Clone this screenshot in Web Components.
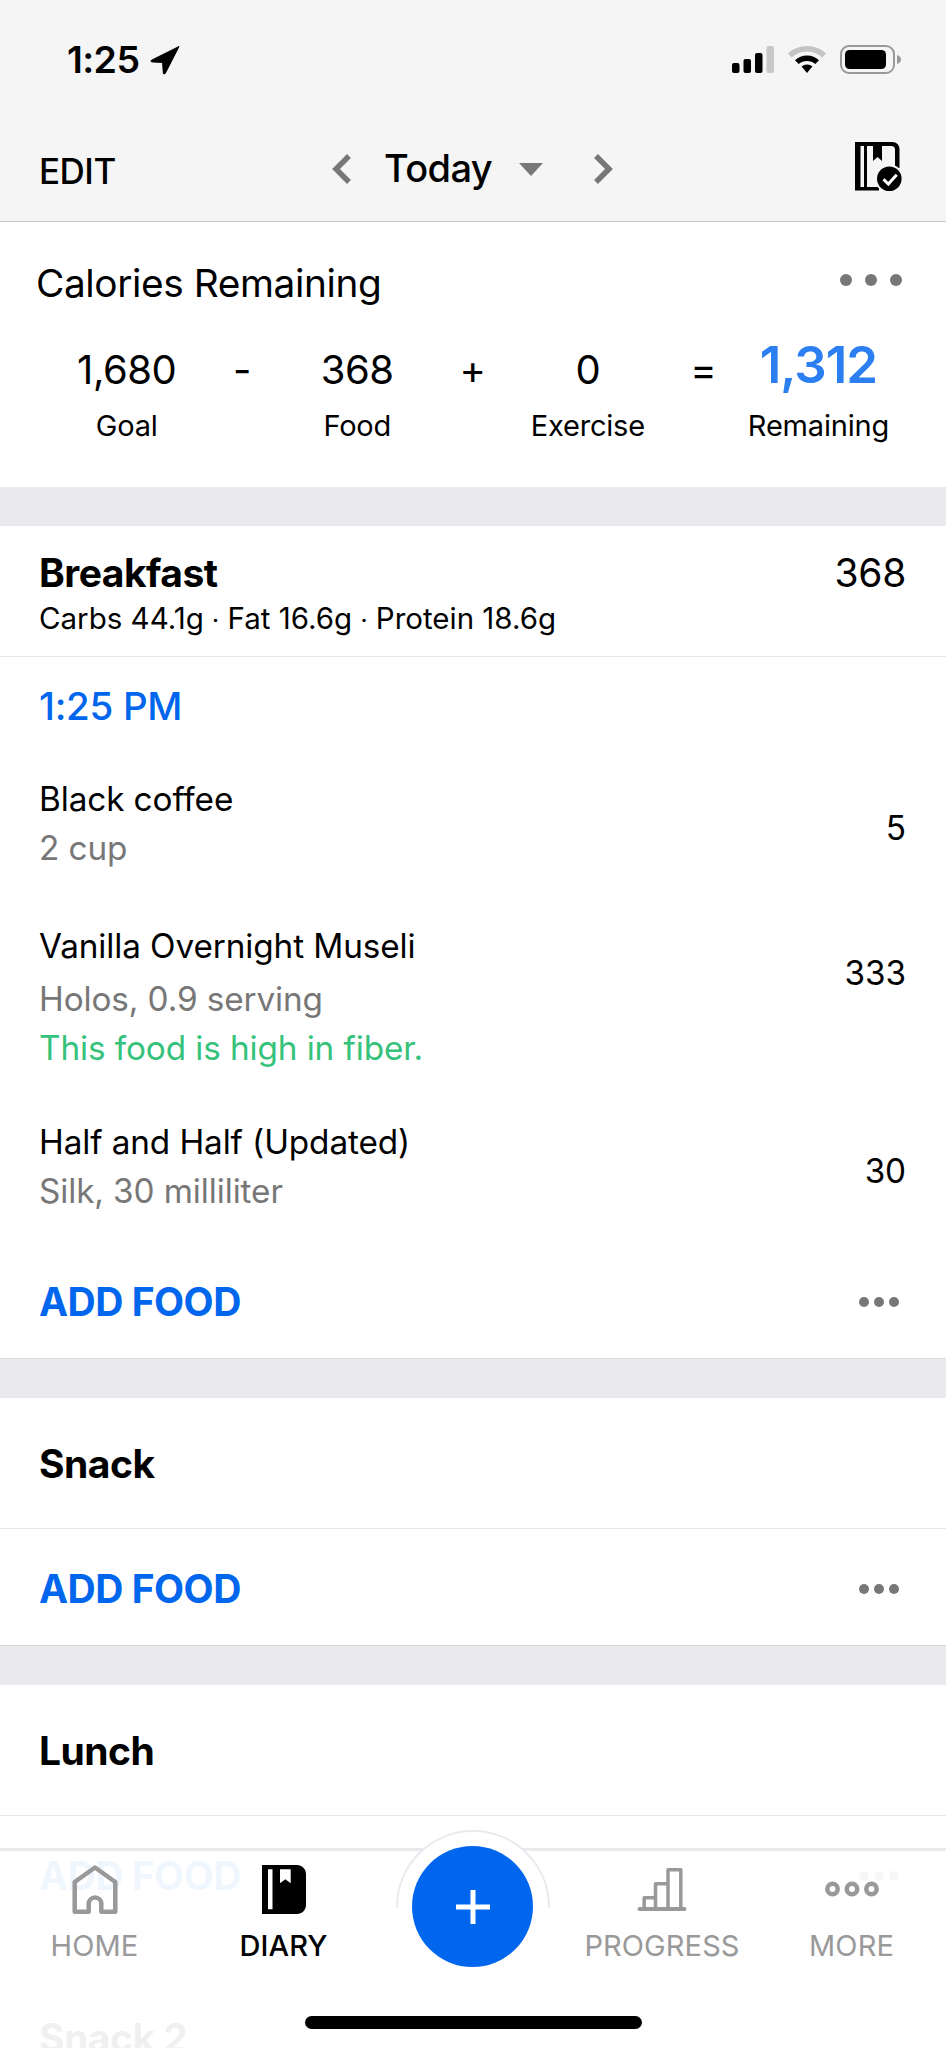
<!DOCTYPE html>
<html>
<head>
<meta charset="utf-8">
<style>
    html, body { margin: 0; padding: 0; background: #e9e9ee; }
    body { width: 946px; height: 2048px; overflow: hidden; position: relative; font-family: Inter, "Noto Sans", sans-serif; color: #000; }
</style>
</head>
<body>
<diary-screen>
    <status-bar></status-bar>
    <diary-header></diary-header>
    <calories-card></calories-card>
    <meal-section>
        <span slot="title">Breakfast</span>
        <span slot="total">368</span>
        <span slot="macros">Carbs 44.1g <small>·</small> Fat 16.6g <small>·</small> Protein 18.6g</span>
        <time-label>1:25 PM</time-label>
        <food-row name="Black coffee" detail="2 cup" kcal="5"></food-row>
        <food-row name="Vanilla Overnight Museli" detail="Holos, 0.9 serving" note="This food is high in fiber." kcal="333"></food-row>
        <food-row name="Half and Half (Updated)" detail="Silk, 30 milliliter" kcal="30"></food-row>
    </meal-section>
    <meal-section><span slot="title">Snack</span></meal-section>
    <meal-section><span slot="title">Lunch</span></meal-section>
    <meal-section hide-add><span slot="title">Snack 2</span></meal-section>
</diary-screen>
<tab-bar></tab-bar>

<script>
class DiaryScreen extends HTMLElement {
    constructor() {
        super();
        this.attachShadow({ mode: 'open' }).innerHTML = `
            <style>
                :host { display: flex; flex-direction: column; height: 2048px; overflow: hidden; }
            </style>
            <slot></slot>
        `;
    }
}
customElements.define('diary-screen', DiaryScreen);

class StatusBar extends HTMLElement {
    constructor() {
        super();
        this.attachShadow({ mode: 'open' }).innerHTML = `
            <style>
                :host { display: flex; align-items: center; flex: none; height: 121px; padding: 0 44px 2px 67px; box-sizing: border-box; background: #f5f5f5; }
                .time { font-size: 37.5px; font-weight: 600; letter-spacing: -0.6px; }
                .arrow { margin-left: 11px; }
                .right { margin-left: auto; display: flex; align-items: center; gap: 13px; }
            </style>
            <span class="time">1:25</span>
            <svg class="arrow" width="30" height="30" viewBox="0 0 30 30"><path d="M29 1.500 1.500 15.200c-.9.6-.6 1.600.5 1.700l10.600.5.7 10.600c.1 1.200 1.400 1.400 2 .3z" fill="#000" stroke="#000" stroke-width="1" stroke-linejoin="round"/></svg>
            <div class="right">
                <svg width="42" height="28" viewBox="0 0 42 28">
                    <rect x="0" y="17" width="7.500" height="10" rx="2"/>
                    <rect x="11.500" y="13" width="7.500" height="14" rx="2"/>
                    <rect x="23" y="7" width="7.500" height="20" rx="2"/>
                    <rect x="34.500" y="0" width="7.500" height="27" rx="2" fill="#c8c8c8"/>
                </svg>
                <svg width="40" height="29" viewBox="0 0 40 29">
                    <path d="M20 1C12.800 1 6 3.800 1 8.500l3.800 4C8.800 8.800 14.200 6.600 20 6.600S31.200 8.800 35.200 12.500l3.800-4C34 3.800 27.200 1 20 1z" fill="#c4c4c4"/>
                    <path d="M20 10.500c-4.600 0-8.800 1.800-12 4.700l3.700 3.900c2.200-2 5.100-3.200 8.300-3.200s6.100 1.200 8.300 3.200l3.700-3.900c-3.200-2.900-7.400-4.700-12-4.700z"/>
                    <path d="M20 19.400c-2.100 0-4 .8-5.400 2.100L20 28l5.400-6.500c-1.400-1.300-3.300-2.100-5.400-2.100z"/>
                </svg>
                <svg width="62" height="30" viewBox="0 0 62 30">
                    <rect x="1" y="1" width="53" height="27" rx="8" fill="none" stroke="#999" stroke-width="2"/>
                    <rect x="5" y="5" width="41" height="19" rx="4.500"/>
                    <path d="M57 10c2.500.8 4 2.500 4 4.500S59.500 18.200 57 19z" fill="#999"/>
                </svg>
            </div>
        `;
    }
}
customElements.define('status-bar', StatusBar);

class DiaryHeader extends HTMLElement {
    constructor() {
        super();
        this.attachShadow({ mode: 'open' }).innerHTML = `
            <style>
                :host { display: grid; grid-template-columns: 293px auto 1fr; align-items: center; flex: none; height: 101px; padding: 0 44px 0 39px; box-sizing: border-box; background: #f5f5f5; border-bottom: 1px solid #c9c9cc; }
                .edit { font-size: 35px; font-weight: 500; letter-spacing: -0.5px; }
                .nav { display: flex; align-items: center; margin-top: -4px; }
                .today { font-size: 38px; font-weight: 500; margin: -2px 27px 0 32px; letter-spacing: -0.6px; }
                .right { justify-self: end; align-self: start; margin-top: 21px; }
            </style>
            <span class="edit">EDIT</span>
            <div class="nav">
                <svg width="20" height="32" viewBox="0 0 20 32"><path d="M17 3 4 16l13 13" fill="none" stroke="#777" stroke-width="5.500"/></svg>
                <span class="today">Today</span>
                <svg width="24" height="13" viewBox="0 0 24 13"><path d="M0 0h24L12 13z" fill="#777"/></svg>
                <svg style="margin-left:50px" width="20" height="32" viewBox="0 0 20 32"><path d="M3 3l13 13L3 29" fill="none" stroke="#777" stroke-width="5.500"/></svg>
            </div>
            <svg class="right" width="47" height="50" viewBox="0 0 47 50">
                <path fill-rule="evenodd" d="M0 0h37.500c3.900 0 7 3.100 7 7v19h-4.500V7.500c0-2-1.500-3.500-3.500-3.500H27v15l-4.500-4-4.500 4V4H12v41h12v3.500H0zM5.500 4v41H9V4z"/>
                <circle cx="34.300" cy="36.700" r="13.300" fill="#000" stroke="#f5f5f5" stroke-width="2"/>
                <path d="M28.500 37.300l4.800 4.800 8.400-9.400" fill="none" stroke="#fff" stroke-width="3"/>
            </svg>
        `;
    }
}
customElements.define('diary-header', DiaryHeader);

class CaloriesCard extends HTMLElement {
    constructor() {
        super();
        const cols = [['1,680', 'Goal'], ['-'], ['368', 'Food'], ['+'], ['0', 'Exercise'], ['='], ['1,312', 'Remaining']];
        this.attachShadow({ mode: 'open' }).innerHTML = `
            <style>
                :host { display: block; flex: none; height: 265px; background: #fff; box-sizing: border-box; }
                .title { display: flex; align-items: center; justify-content: space-between; height: 62px; padding: 27px 44px 0 36px; }
                .title span { font-size: 38.800px; font-weight: 400; letter-spacing: -0.4px; margin-top: 4px; }
                .grid { display: grid; grid-template-columns: repeat(7, 115.3px); padding: 30px 0 0 69px; }
                .col { display: flex; flex-direction: column; align-items: center; white-space: nowrap; }
                .num { height: 60px; line-height: 58px; font-size: 40px; letter-spacing: -0.5px; }
                .label { height: 50px; line-height: 50px; font-size: 29px; letter-spacing: -0.2px; }
                .total .num { color: #2b7ff0; font-size: 51px; font-weight: 600; transform: translateY(-5px); letter-spacing: -1px; }
            </style>
            <div class="title"><span>Calories Remaining</span><more-dots size="6" gap="25" color="#777"></more-dots></div>
            <div class="grid">
                ${cols.map((c, i) => `<div class="col ${i === 6 ? 'total' : ''}"><span class="num">${c[0]}</span>${c[1] ? `<span class="label">${c[1]}</span>` : ''}</div>`).join('')}
            </div>
        `;
    }
}
customElements.define('calories-card', CaloriesCard);

class MoreDots extends HTMLElement {
    constructor() {
        super();
        const r = +this.getAttribute('size');
        const gap = +this.getAttribute('gap');
        const color = this.getAttribute('color');
        this.attachShadow({ mode: 'open' }).innerHTML = `
            <style>:host { display: block; line-height: 0; }</style>
            <svg width="${gap * 2 + r * 2}" height="${r * 2}" fill="${color}">
                <circle cx="${r}" cy="${r}" r="${r}"/>
                <circle cx="${r + gap}" cy="${r}" r="${r}"/>
                <circle cx="${r + gap * 2}" cy="${r}" r="${r}"/>
            </svg>
        `;
    }
}
customElements.define('more-dots', MoreDots);

class MealSection extends HTMLElement {
    constructor() {
        super();
        this.attachShadow({ mode: 'open' }).innerHTML = `
            <style>
                :host { display: block; flex: none; margin-top: 39px; background: #fff; border-bottom: 1px solid #d9d9dc; }
                .head { height: 131px; box-sizing: border-box; border-bottom: 1px solid #e6e6ea; padding: 1px 40px 0 39px; display: flex; align-items: center; justify-content: space-between; }
                .title { font-size: 39px; font-weight: 700; letter-spacing: -0.5px; line-height: 47px; }
                .total { font-size: 39px; letter-spacing: -0.3px; line-height: 47px; }
                .macros { font-size: 29.500px; display: block; white-space: nowrap; line-height: 42px; margin-top: 1px; }
                :host(.with-macros) .head { align-items: flex-start; padding-top: 23px; }
                :host([hide-add]) .add { display: none; }
                .add { height: 116px; box-sizing: border-box; display: flex; align-items: center; justify-content: space-between; padding: 3px 47px 0 39px; }
                .add span { font-size: 39px; font-weight: 700; color: #0066ee; letter-spacing: -0.5px; }
                ::slotted(small) { font-size: 16px; }
            </style>
            <div class="head">
                <div><div class="title"><slot name="title"></slot></div><div class="macros"><slot name="macros"></slot></div></div>
                <div class="total"><slot name="total"></slot></div>
            </div>
            <slot></slot>
            <div class="add"><span>ADD FOOD</span><more-dots size="5" gap="15" color="#777"></more-dots></div>
        `;
        // sections without macros keep their title centred
        if (this.querySelector('[slot=macros]')) this.classList.add('with-macros');
        else this.shadowRoot.querySelector('.macros').style.display = 'none';
    }
}
customElements.define('meal-section', MealSection);

class TimeLabel extends HTMLElement {
    constructor() {
        super();
        this.attachShadow({ mode: 'open' }).innerHTML = `
            <style>:host { display: block; height: 100px; line-height: 98px; padding: 0 39px; font-size: 38.500px; font-weight: 500; color: #0066ee; letter-spacing: -0.3px; }</style>
            <slot></slot>
        `;
    }
}
customElements.define('time-label', TimeLabel);

class FoodRow extends HTMLElement {
    constructor() {
        super();
        const note = this.getAttribute('note');
        this.attachShadow({ mode: 'open' }).innerHTML = `
            <style>
                :host { display: flex; align-items: flex-start; justify-content: space-between; padding: 0 40px 0 39px; margin: 18px 0 26px; line-height: 49px; font-size: 33.300px; letter-spacing: -0.1px; }
                :host([note]) { margin: 49px 0 45px; }
                :host([note]) .kcal { margin-top: 27px; }
                :host([note]) .detail { margin-top: 4px; }
                .name, .detail, .note { white-space: nowrap; }
                .detail { color: #777; }
                .note { color: #35c27b; }
                .kcal { margin-top: 29px; }
            </style>
            <div>
                <div class="name">${this.getAttribute('name')}</div>
                <div class="detail">${this.getAttribute('detail')}</div>
                ${note ? `<div class="note">${note}</div>` : ''}
            </div>
            <span class="kcal">${this.getAttribute('kcal')}</span>
        `;
    }
}
customElements.define('food-row', FoodRow);

class TabBar extends HTMLElement {
    constructor() {
        super();
        this.attachShadow({ mode: 'open' }).innerHTML = `
            <style>
                :host { position: absolute; left: 0; right: 0; bottom: 0; height: 200px; background: rgba(255,255,255,0.94); border-top: 3px solid #e9e9ee; box-sizing: border-box; }
                .tabs { display: grid; grid-template-columns: 189px 189px 189px 190px 189px; padding-top: 13px; }
                .tab { display: flex; flex-direction: column; align-items: center; color: #999; font-size: 29px; letter-spacing: 0.1px; }
                .tab svg { height: 52px; display: block; }
                .tab span { margin-top: 12px; line-height: 35px; white-space: nowrap; }
                .tab.on { color: #000; font-weight: 500; }
                .ring { position: absolute; left: 396px; top: -21px; width: 154px; height: 78px; overflow: hidden; }
                .ring i { display: block; width: 150px; height: 150px; border-radius: 50%; border: 2px solid #e9e9ee; background: #fff; }
                .fab { position: absolute; left: 412px; top: -5px; width: 121px; height: 121px; border-radius: 50%; background: #0066ee; display: flex; align-items: center; justify-content: center; }
                .home { position: absolute; left: 305px; top: 165px; width: 337px; height: 13px; border-radius: 7px; background: #000; }
            </style>
            <div class="ring"><i></i></div>
            <div class="fab"><svg width="36" height="36" viewBox="0 0 36 36"><path d="M18 1v34M1 18h34" stroke="#fff" stroke-width="5"/></svg></div>
            <div class="tabs">
                <div class="tab">
                    <svg width="46" height="52" viewBox="0 0 46 52"><path d="M2.700 47.700V18L23 3.500 43.300 18v29.700H29.300v-8a6.300 6.300 0 0 0-12.600 0v8z" fill="none" stroke="#999" stroke-width="4.500" stroke-linejoin="round"/></svg>
                    <span>HOME</span>
                </div>
                <div class="tab on">
                    <svg width="44" height="52" viewBox="0 0 44 52"><path fill-rule="evenodd" d="M0 1h35c5 0 9 4 9 9v31c0 5-4 9-9 9H0zM6 5.300v40h4.500v-40zM18 5.300v14l5.350-4 5.350 4v-14z"/></svg>
                    <span>DIARY</span>
                </div>
                <div></div>
                <div class="tab">
                    <svg width="50" height="52" viewBox="0 0 50 52"><path d="M7.200 45V33.700h11.300V45M18.500 45V19.700H31V45M31 45V5.700h12.800V45" fill="none" stroke="#999" stroke-width="3.500" stroke-linejoin="round"/><path d="M2.500 45h45" stroke="#999" stroke-width="4" stroke-linecap="round"/></svg>
                    <span>PROGRESS</span>
                </div>
                <div class="tab">
                    <svg width="54" height="52" viewBox="0 0 54 52" fill="none" stroke="#999" stroke-width="4.500"><circle cx="7.500" cy="25" r="5.200"/><circle cx="27" cy="25" r="5.200"/><circle cx="46.500" cy="25" r="5.200"/></svg>
                    <span>MORE</span>
                </div>
            </div>
            <div class="home"></div>
        `;
    }
}
customElements.define('tab-bar', TabBar);
</script>
</body>
</html>
